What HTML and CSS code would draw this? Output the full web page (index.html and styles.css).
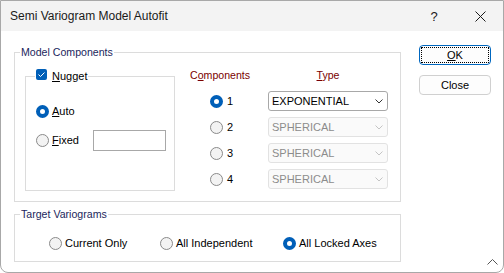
FILE: index.html
```html
<!DOCTYPE html>
<html lang="en">
<head>
    <meta charset="UTF-8">
    <title>Semi Variogram Model Autofit</title>
    <link rel="stylesheet" href="styles.css">
</head>
<body>
    <div class="window">
        <div class="titlebar">
            <span class="title">Semi Variogram Model Autofit</span>
            <span class="tb-btn">?</span>
            <span class="tb-btn">
                <svg width="11" height="11" viewBox="0 0 11 11"><path d="M0.5 0.5 L10.5 10.5 M10.5 0.5 L0.5 10.5" stroke="#1a1a1a" stroke-width="1"/></svg>
            </span>
        </div>
        <div class="body">
            <div class="main">
                <div class="group model">
                    <div class="group-title">Model Components</div>
                    <div class="model-row">
                        <div class="nugget">
                            <div class="nugget-title">
                                <span class="check">
                                    <svg width="11" height="11" viewBox="0 0 11 11"><path d="M2.5 5.5 L4.5 7.5 L8.5 3.5" stroke="#fff" stroke-width="1" fill="none"/></svg>
                                </span>
                                <span><u>N</u>ugget</span>
                            </div>
                            <div class="opt auto"><span class="radio on"></span><span><u>A</u>uto</span></div>
                            <div class="opt fixed"><span class="radio"></span><span class="fixed-label"><u>F</u>ixed</span><span class="textbox"></span></div>
                        </div>
                        <div class="comps">
                            <div class="head">C<u>o</u>mponents</div>
                            <div class="head type"><u>T</u>ype</div>

                            <div class="comp"><span class="radio on"></span>1</div>
                            <div class="combo">EXPONENTIAL
                                <svg width="8" height="5" viewBox="0 0 8 5"><path d="M0.5 0.5 L4 4 L7.5 0.5" stroke="#333" fill="none"/></svg>
                            </div>

                            <div class="comp"><span class="radio"></span>2</div>
                            <div class="combo disabled">SPHERICAL
                                <svg width="8" height="5" viewBox="0 0 8 5"><path d="M0.5 0.5 L4 4 L7.5 0.5" stroke="#c4c4c4" fill="none"/></svg>
                            </div>

                            <div class="comp"><span class="radio"></span>3</div>
                            <div class="combo disabled">SPHERICAL
                                <svg width="8" height="5" viewBox="0 0 8 5"><path d="M0.5 0.5 L4 4 L7.5 0.5" stroke="#c4c4c4" fill="none"/></svg>
                            </div>

                            <div class="comp"><span class="radio"></span>4</div>
                            <div class="combo disabled">SPHERICAL
                                <svg width="8" height="5" viewBox="0 0 8 5"><path d="M0.5 0.5 L4 4 L7.5 0.5" stroke="#c4c4c4" fill="none"/></svg>
                            </div>
                        </div>
                    </div>
                </div>
                <div class="group target">
                    <div class="group-title">Target Variograms</div>
                    <div class="targets">
                        <div class="opt"><span class="radio"></span><span>Current Only</span></div>
                        <div class="opt"><span class="radio"></span><span>All Independent</span></div>
                        <div class="opt"><span class="radio on"></span><span>All Locked Axes</span></div>
                    </div>
                </div>
            </div>
            <div class="buttons">
                <div class="btn default"><span class="focus"><u>O</u>K</span></div>
                <div class="btn">Close</div>
            </div>
        </div>
        <div class="grip">
            <svg width="11" height="6" viewBox="0 0 11 6"><path d="M0.5 5.5 L5.5 0.5 L10.5 5.5" stroke="#555" fill="none"/></svg>
        </div>
    </div>
</body>
</html>
```

FILE: styles.css
```css
body {
    margin: 0;
    padding: 0;
    font-family: "Liberation Sans", Arial, sans-serif;
    font-size: 11px;
    color: #000;
    background-color: #fff;
}
u {
    text-decoration: underline;
    text-underline-offset: 1px;
}
.window {
    position: relative;
    width: 504px;
    height: 273px;
    box-sizing: border-box;
    border: 1px solid #a8a8a8;
    border-radius: 0 0 8px 8px;
    background-color: #fff;
    overflow: hidden;
}
.titlebar {
    height: 30px;
    background-color: #f3f3f3;
    display: flex;
    align-items: center;
}
.title {
    font-size: 12px;
    color: #1a1a1a;
    padding-left: 9px;
    flex: 1;
}
.tb-btn {
    width: 46px;
    height: 30px;
    display: flex;
    align-items: center;
    justify-content: center;
    font-size: 13px;
    color: #1a1a1a;
}
.body {
    display: flex;
    padding: 14px 0 0 13px;
}
.main {
    width: 387px;
    padding-top: 7px;
}
.group {
    border: 1px solid #dcdcdc;
    box-sizing: border-box;
}
.group-title {
    width: fit-content;
    height: 14px;
    line-height: 14px;
    margin: -8px 0 0 5px;
    padding: 0 1px;
    background-color: #fff;
    font-size: 10.6px;
    color: #1b1f5c;
}
.model {
    height: 150px;
}
.model-row {
    display: flex;
    align-items: flex-start;
    padding-left: 10px;
}
.nugget {
    width: 150px;
    height: 115px;
    margin-top: 17px;
    box-sizing: border-box;
    border: 1px solid #dcdcdc;
}
.nugget-title {
    display: flex;
    width: fit-content;
    align-items: flex-start;
    height: 14px;
    line-height: 14px;
    margin: -8px 0 0 9px;
    padding: 0 1px;
    background-color: #fff;
}
.check {
    width: 11px;
    height: 11px;
    border-radius: 2px;
    background-color: #005fb8;
    display: flex;
    margin-right: 5px;
}
.opt {
    display: flex;
    align-items: center;
    height: 14px;
    line-height: 14px;
}
.nugget .opt {
    margin-left: 10px;
}
.auto {
    margin-top: 21px;
}
.fixed {
    margin-top: 15px;
}
.fixed-label {
    width: 41px;
}
.textbox {
    width: 73px;
    height: 21px;
    flex: none;
    box-sizing: border-box;
    border: 1px solid #a8a8a8;
    background-color: #fff;
}
.radio {
    width: 13px;
    height: 13px;
    box-sizing: border-box;
    border-radius: 50%;
    border: 1px solid #8a8a8a;
    background-color: #f3f3f3;
    margin-right: 3px;
    flex: none;
}
.radio.on {
    border: 4px solid #005fb8;
    background-color: #fff;
}
.comps {
    display: grid;
    grid-template-columns: 78px 120px;
    row-gap: 6px;
    margin: 9px 0 0 15px;
}
.head {
    height: 17px;
    line-height: 14px;
    color: #7a0000;
    font-size: 10.6px;
}
.head.type {
    text-align: center;
}
.comp {
    display: flex;
    align-items: center;
    padding-left: 20px;
}
.comp .radio {
    margin-right: 4px;
}
.combo {
    height: 20px;
    box-sizing: border-box;
    border: 1px solid #a8a8a8;
    border-radius: 3px;
    background-color: #fff;
    padding: 0 4px 0 3px;
    display: flex;
    align-items: center;
    justify-content: space-between;
    font-size: 11px;
}
.combo.disabled {
    border-color: #e2e2e2;
    background-color: #fafafa;
    color: #8c8c8c;
}
.target {
    height: 48px;
    margin-top: 12px;
}
.targets {
    display: grid;
    grid-template-columns: 111px 123px auto;
    padding-left: 34px;
    margin-top: 15px;
}
.buttons {
    margin-left: 18px;
    display: flex;
    flex-direction: column;
    gap: 10px;
}
.btn {
    width: 72px;
    height: 20px;
    box-sizing: border-box;
    border: 1px solid #d0d0d0;
    border-radius: 4px;
    background-color: #fdfdfd;
    display: flex;
    align-items: center;
    justify-content: center;
}
.btn.default {
    border-color: #0067c0;
    padding: 1px;
}
.focus {
    flex: 1;
    align-self: stretch;
    border: 1px dotted #000;
    display: flex;
    align-items: center;
    justify-content: center;
}
.grip {
    position: absolute;
    right: 5px;
    bottom: 7px;
    display: flex;
}
```
